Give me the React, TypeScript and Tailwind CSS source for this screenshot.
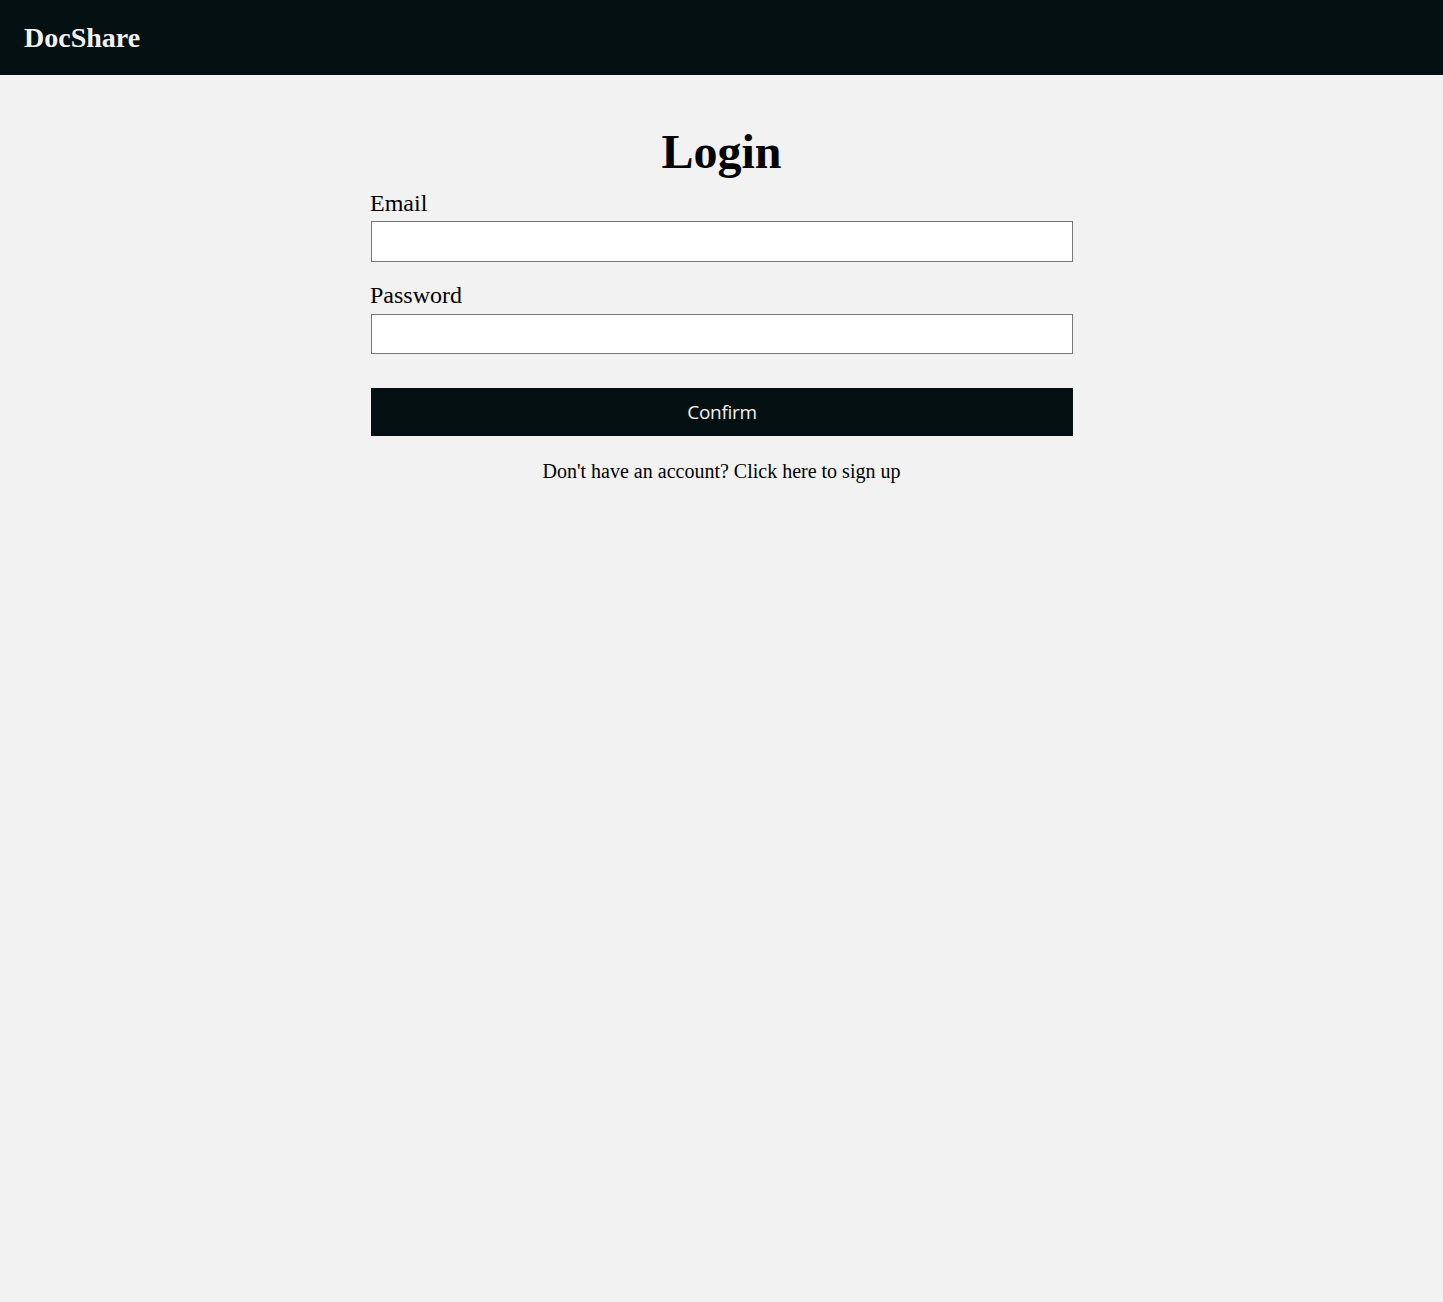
export default function App() {
  return (
    <div className="min-h-[1302px] bg-[#f2f2f2]" style={{ fontFamily: '"Liberation Serif", serif' }}>
      <header className="h-[75px] bg-[#051012] flex items-center px-6">
        <span className="text-[28px] font-bold text-[#f2f2f2] leading-none">DocShare</span>
      </header>
      <main className="w-[703px] mx-auto flex flex-col">
        <h1 className="mt-[49px] text-[48px] font-bold text-center leading-[55px] text-black">Login</h1>
        <label className="mt-[10px] text-[24px] leading-[28px] text-black">Email</label>
        <input type="email" className="mt-[4px] ml-px w-[702px] h-[41px] bg-white border border-[#767676] outline-none" />
        <label className="mt-[19px] text-[24px] leading-[28px] text-black">Password</label>
        <input type="password" className="mt-[5px] ml-px w-[702px] h-[40px] bg-white border border-[#767676] outline-none" />
        <button className="mt-[34px] ml-px w-[702px] h-[48px] bg-[#051012] text-[#f2f2f2] text-[19px] tracking-[-0.3px]" style={{ fontFamily: '"Open Sans", sans-serif' }}>Confirm</button>
        <p className="mt-[24px] text-center text-[20px] leading-[23px] text-black">Don't have an account? Click here to sign up</p>
      </main>
    </div>
  );
}
